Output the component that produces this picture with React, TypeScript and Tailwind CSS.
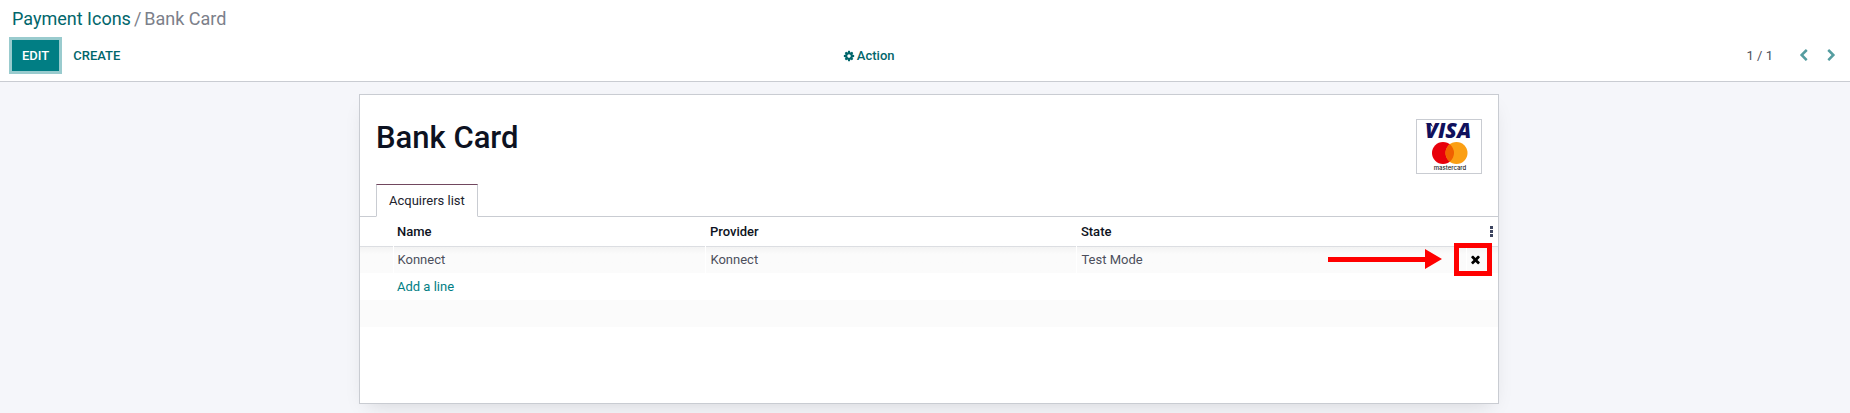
import type { ReactNode } from "react";

const ICONS = {
  cog: "M1152 896q0-106-75-181t-181-75-181 75-75 181 75 181 181 75 181-75 75-181zm512-109v222q0 12-8 23t-20 13l-185 28q-19 54-39 91 35 50 107 138 10 12 10 25t-9 23q-27 37-99 108t-94 71q-12 0-26-9l-138-108q-44 23-91 38-16 136-29 186-7 28-36 28h-222q-14 0-24.5-8.5t-11.5-21.5l-28-184q-49-16-90-37l-141 107q-10 9-25 9-14 0-25-11-126-114-165-168-7-10-7-23 0-12 8-23 15-21 51-66.5t54-70.5q-27-50-41-99l-183-27q-13-2-21-12.5t-8-23.5v-222q0-12 8-23t19-13l186-28q14-46 39-92-40-57-107-138-10-12-10-24 0-10 9-23 26-36 98.5-107.5t94.5-71.5q13 0 26 10l138 107q44-23 91-38 16-136 29-186 7-28 36-28h222q14 0 24.5 8.5t11.5 21.5l28 184q49 16 90 37l142-107q9-9 24-9 13 0 25 10 129 119 165 170 7 8 7 22 0 12-8 23-15 21-51 66.5t-54 70.5q26 50 41 98l183 28q13 2 21 12.5t8 23.5z",
  left: "M1427 301l-531 531 531 531q19 19 19 45t-19 45l-166 166q-19 19-45 19t-45-19l-742-742q-19-19-19-45t19-45l742-742q19-19 45-19t45 19l166 166q19 19 19 45t-19 45z",
  right:
    "M1363 877l-742 742q-19 19-45 19t-45-19l-166-166q-19-19-19-45t19-45l531-531-531-531q-19-19-19-45t19-45l166-166q19-19 45-19t45 19l742 742q19 19 19 45t-19 45z",
  times:
    "M1490 1322q0 40-28 68l-136 136q-28 28-68 28t-68-28l-294-294-294 294q-28 28-68 28t-68-28l-136-136q-28-28-28-68t28-68l294-294-294-294q-28-28-28-68t28-68l136-136q28-28 68-28t68 28l294 294 294-294q28-28 68-28t68 28l136 136q28 28 28 68t-28 68l-294 294 294 294q28 28 28 68z",
};

function Icon({ name, className }: { name: keyof typeof ICONS; className: string }) {
  return (
    <svg viewBox="0 0 1792 1792" fill="currentColor" aria-hidden="true" className={className}>
      <path d={ICONS[name]} />
    </svg>
  );
}

function CardLogo() {
  return (
    <svg
      viewBox="0 0 64 53"
      role="img"
      aria-label="Visa and Mastercard"
      className="h-[53px] w-16 overflow-visible"
    >
      <text
        x="8"
        y="18"
        fontSize="21"
        fontWeight="800"
        fontStyle="italic"
        fill="#10105c"
        className="font-['Open_Sans',sans-serif]"
      >
        VISA
      </text>
      <path d="M8 3h6l2 4q-3-3-8-4z" fill="#10105c" />
      <circle cx="26" cy="33" r="11" fill="#e8000b" />
      <circle cx="39.5" cy="33" r="11" fill="#fb9f14" />
      <path d="M32.75 24.3a11 11 0 0 1 0 17.4a11 11 0 0 1 0-17.4z" fill="#f06000" />
      <text
        x="33"
        y="50"
        fontSize="6"
        fontWeight="500"
        textAnchor="middle"
        fill="#222"
        className="font-[Inter,sans-serif]"
      >
        mastercard
      </text>
    </svg>
  );
}

function Cell({ children }: { children?: ReactNode }) {
  return <td className="border-l border-white px-1 py-0">{children}</td>;
}

export default function App() {
  return (
    <div className="flex min-h-screen flex-col bg-[#f5f6fa] font-[Roboto,sans-serif] text-[13px] leading-5 text-[#4c4f5c]">
      <header className="border-b border-[#c9ccd2] bg-white px-3 pb-2.5">
        <nav aria-label="Breadcrumb" className="flex h-10 gap-[3px] pt-[7px] text-lg leading-6 text-[#7c808a]">
          <a href="#icons" className="text-[#01666b]">
            Payment Icons
          </a>
          <span>/</span>
          <span>Bank Card</span>
        </nav>
        <div className="flex h-[31px] items-center">
          <div className="flex w-[45.5%] items-center">
            <button
              type="button"
              className="h-[31px] bg-[#017e84] px-2.5 font-medium text-white ring-3 ring-[#017e84]/40"
            >
              EDIT
            </button>
            <button type="button" className="h-[31px] px-3.5 font-medium text-[#01666b]">
              CREATE
            </button>
          </div>
          <button type="button" className="flex items-center gap-0.5 font-medium text-[#01666b]">
            <Icon name="cog" className="size-3" />
            Action
          </button>
          <div className="ml-auto flex items-center">
            <span className="mr-6">1 / 1</span>
            <button type="button" aria-label="Previous" className="mr-[15px] text-[#559da0]">
              <Icon name="left" className="size-[13px]" />
            </button>
            <button type="button" aria-label="Next" className="text-[#559da0]">
              <Icon name="right" className="size-[13px]" />
            </button>
          </div>
        </div>
      </header>

      <main className="flex-1 overflow-hidden pt-3 pb-2.5 pl-2">
        <section className="mx-auto max-w-[1140px] border border-[#c9ccd2] bg-white pb-[76px] shadow-[0_8px_20px_-8px_rgba(0,0,0,0.15)]">
          <div className="flex justify-between px-4 pt-6">
            <h1 className="text-[31px] leading-[38px] font-medium text-[#0d1221]">Bank Card</h1>
            <div className="border border-[#c9ccd2]">
              <CardLogo />
            </div>
          </div>
          <div role="tablist" className="mt-2.5 flex border-b border-[#c9ccd2] px-4">
            <button
              type="button"
              role="tab"
              aria-selected="true"
              className="-mb-px h-[33px] border border-t-[#71475f] border-r-[#c9ccd2] border-b-white border-l-[#c9ccd2] bg-white px-3 text-[#20222d]"
            >
              Acquirers list
            </button>
          </div>
          <table className="w-full table-fixed border-collapse text-left">
            <colgroup>
              <col className="w-[33px]" />
              <col className="w-[27.5%]" />
              <col className="w-[32.6%]" />
              <col />
              <col className="w-[32px]" />
            </colgroup>
            <thead>
              <tr className="h-[29px] border-b border-[#dcdee2] text-[#0d1221]">
                <td />
                <th className="px-1 pt-0.5 pb-0 font-medium">Name</th>
                <th className="px-1 pt-0.5 pb-0 font-medium">Provider</th>
                <th className="px-1 pt-0.5 pb-0 font-medium">State</th>
                <td className="p-0 pr-[5px]">
                  <button type="button" aria-label="Optional columns" className="ml-auto block">
                    <svg viewBox="0 0 3 11" fill="#3d4560" className="h-[11px] w-[3px]">
                      <path d="M0 0h3v3H0zM0 4h3v3H0zM0 8h3v3H0z" />
                    </svg>
                  </button>
                </td>
              </tr>
            </thead>
            <tbody>
              <tr className="h-[27px] bg-[#fbfbfb] bg-linear-to-b from-[#f2f2f2] to-[#fbfbfb] to-30%">
                <td />
                <Cell>Konnect</Cell>
                <Cell>Konnect</Cell>
                <Cell>
                  <div className="relative">
                    Test Mode
                    <svg
                      viewBox="0 0 114 20"
                      fill="#ff0000"
                      aria-hidden="true"
                      className="absolute -top-px right-5 h-5 w-[114px]"
                    >
                      <path d="M0 8h97V0l17 10-17 10v-7H0z" />
                    </svg>
                  </div>
                </Cell>
                <td className="border-l border-white px-0.5 py-0">
                  <div className="relative flex h-5 items-center">
                    <button type="button" aria-label="Delete row" className="text-black">
                      <Icon name="times" className="size-[13px]" />
                    </button>
                    <div className="pointer-events-none absolute -top-[7px] right-1 h-[33px] w-[38px] border-5 border-[#ff0000]" />
                  </div>
                </td>
              </tr>
              <tr className="h-[27px]">
                <td />
                <td colSpan={4} className="px-1 py-0">
                  <a href="#add" className="text-[#017e84]">
                    Add a line
                  </a>
                </td>
              </tr>
              <tr className="h-[27px] bg-[#fbfbfb]">
                <td colSpan={5} />
              </tr>
            </tbody>
          </table>
        </section>
      </main>
    </div>
  );
}
